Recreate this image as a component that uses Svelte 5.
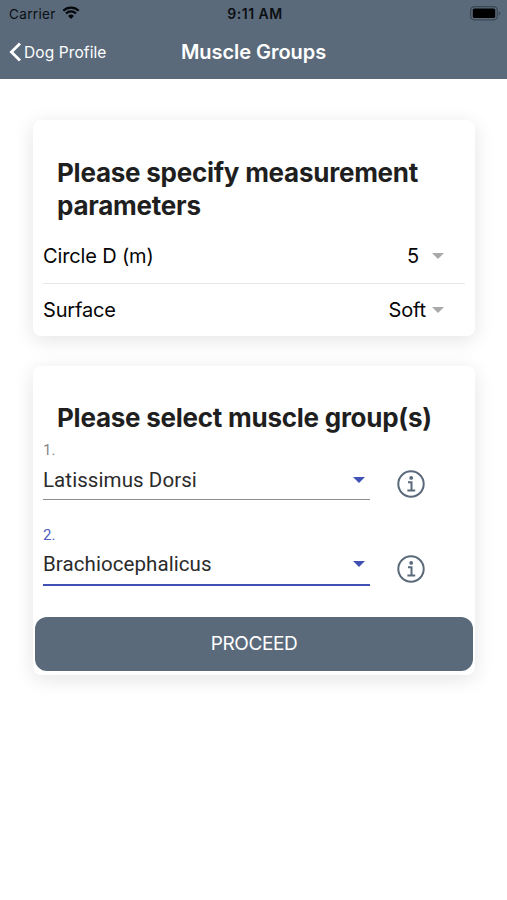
<script lang="ts">
  let parameters = [
    { label: "Circle D (m)", value: "5" },
    { label: "Surface", value: "Soft" },
  ];

  let muscles = [
    { id: 1, name: "Latissimus Dorsi" },
    { id: 2, name: "Brachiocephalicus" },
  ];

  let focused = 2;
</script>

<div class="screen">
  <header>
    <div class="status">
      <div class="carrier">
        <span>Carrier</span>
        <svg class="wifi" viewBox="0 0 18 13">
          <path d="M1.3 4.7a11 11 0 0 1 15.4 0" />
          <path d="M4 7.5a7.1 7.1 0 0 1 10 0" />
          <path class="dot" d="M9 12.9 6.1 10a4.1 4.1 0 0 1 5.8 0z" />
        </svg>
      </div>
      <span class="time">9:11 AM</span>
      <svg class="battery" viewBox="0 0 31 15">
        <rect class="shell" x="0.7" y="0.7" width="26.6" height="13.2" rx="3.6" />
        <rect x="2.8" y="2.6" width="22.4" height="9.4" rx="1.6" />
        <path class="tip" d="M28.8 5.2v4.2q1.5-.8 1.5-2.1t-1.5-2.1z" />
      </svg>
    </div>
    <nav>
      <button class="back">
        <svg viewBox="0 0 13 20">
          <path d="M11 1.4 2.4 10l8.6 8.6" />
        </svg>
        <span>Dog Profile</span>
      </button>
      <h1>Muscle Groups</h1>
    </nav>
  </header>

  <main>
    <section class="card">
      <h2>Please specify measurement parameters</h2>
      {#each parameters as item}
        <div class="row">
          <span class="label">{item.label}</span>
          <span class="value">{item.value}</span>
          <svg class="caret" viewBox="0 0 12 6"><path d="M0 0h12L6 6z" /></svg>
        </div>
      {/each}
    </section>

    <section class="card muscles">
      <h2>Please select muscle group(s)</h2>
      {#each muscles as muscle}
        <div class="field">
          <div class="select" class:focused={muscle.id === focused}>
            <span class="hint">{muscle.id}.</span>
            <div class="choice">
              <span>{muscle.name}</span>
              <svg class="caret" viewBox="0 0 12 6"><path d="M0 0h12L6 6z" /></svg>
            </div>
          </div>
          <svg class="info" viewBox="0 0 28 28">
            <circle cx="14" cy="14" r="12.7" />
            <path d="M11 12.2h3.5v8M10.4 20.5h7.8" />
            <circle class="dot" cx="14.2" cy="7.9" r="1.9" />
          </svg>
        </div>
      {/each}
      <button class="proceed">PROCEED</button>
    </section>
  </main>
</div>

<style>
  :global(body) {
    background: #fff;
  }

  .screen {
    min-height: 900px;
    font-family: Inter, "Liberation Sans", sans-serif;
    color: #050505;
  }

  button {
    border: 0;
    padding: 0;
    background: none;
    font-family: inherit;
    color: #fff;
  }

  header {
    height: 79px;
    background: #5a6a7a;
  }

  .status {
    display: grid;
    grid-template-columns: 1fr auto 1fr;
    align-items: center;
    height: 27px;
    padding: 0 6px 0 9px;
    color: #0b0f14;
    font-size: 13.5px;
  }

  .carrier {
    display: flex;
    align-items: center;
    gap: 6px;
    letter-spacing: 0.35px;
  }

  .wifi {
    width: 18px;
    height: 13px;
    margin-top: -2px;
    fill: none;
    stroke: #05080b;
    stroke-width: 2.2;
  }

  .wifi .dot {
    fill: #05080b;
    stroke: none;
  }

  .time {
    font-size: 14px;
    font-weight: 600;
    letter-spacing: 0.5px;
  }

  .battery {
    justify-self: end;
    width: 31px;
    height: 15px;
  }

  .battery .shell {
    fill: none;
    stroke: #3c4753;
    stroke-width: 1.3;
  }

  .battery .tip {
    fill: #3c4753;
  }

  nav {
    display: grid;
    grid-template-columns: 1fr auto 1fr;
    align-items: center;
    height: 50px;
    padding: 0 9px;
  }

  .back {
    display: flex;
    align-items: center;
    gap: 2px;
    font-size: 15.5px;
    letter-spacing: 0.1px;
  }

  .back svg {
    width: 13px;
    height: 20px;
    fill: none;
    stroke: #fff;
    stroke-width: 2.8;
  }

  h1 {
    margin: 0;
    color: #fff;
    font-size: 20px;
    font-weight: 600;
    letter-spacing: -0.05px;
  }

  main {
    display: grid;
    gap: 30px;
    padding: 41px 32px 0 33px;
  }

  .card {
    box-sizing: border-box;
    height: 216px;
    padding: 36px 10px 0;
    border-radius: 8px;
    background: #fff;
    box-shadow: 0 4px 20px rgba(0, 0, 0, 0.11);
  }

  h2 {
    margin: 0 0 7px;
    padding-left: 14px;
    color: #1f1f1f;
    font-size: 26px;
    font-weight: 700;
    letter-spacing: -0.25px;
    line-height: 33px;
  }

  .row {
    display: flex;
    align-items: center;
    box-sizing: border-box;
    height: 54px;
    padding-right: 21px;
    font-size: 20px;
    letter-spacing: -0.15px;
  }

  .row + .row {
    height: 53px;
    border-top: 1px solid #e6e6e6;
  }

  .label {
    flex: 1;
  }

  .caret {
    width: 12px;
    height: 6px;
    fill: #a9a9a9;
  }

  .row .caret {
    margin: -1px 0 0 6px;
  }

  .row:nth-of-type(1) .caret {
    margin-left: 13px;
  }

  .muscles {
    height: 309px;
    padding-top: 35px;
  }

  .muscles h2 {
    margin-bottom: 6px;
    padding-top: 1px;
    line-height: 32px;
  }

  .field {
    display: flex;
    gap: 27px;
    height: 84.5px;
    font-family: Roboto, sans-serif;
  }

  .select {
    box-sizing: border-box;
    width: 327px;
    height: 60px;
    border-bottom: 1px solid #8c8c8c;
    color: #2b2b2b;
  }

  .select.focused {
    height: 61px;
    border-bottom: 2px solid #3f51b5;
  }

  .hint {
    display: block;
    color: #858585;
    font-size: 15px;
    line-height: 21px;
  }

  .focused .hint {
    color: #4f5fc0;
  }

  .choice {
    display: flex;
    align-items: center;
    justify-content: space-between;
    height: 37px;
    padding-right: 5px;
    font-size: 20.5px;
    letter-spacing: 0.08px;
  }

  .choice .caret {
    fill: #3f51b5;
  }

  .info {
    width: 28px;
    height: 28px;
    margin-top: 30px;
    fill: none;
    stroke: #5a6a7a;
    stroke-width: 2;
  }

  .info .dot {
    fill: #5a6a7a;
    stroke: none;
  }

  .proceed {
    display: block;
    width: 438px;
    height: 54px;
    margin: 7.5px -8px 0;
    border-radius: 12px;
    background: #5a6a7a;
    font-size: 19px;
    letter-spacing: -0.4px;
  }
</style>
